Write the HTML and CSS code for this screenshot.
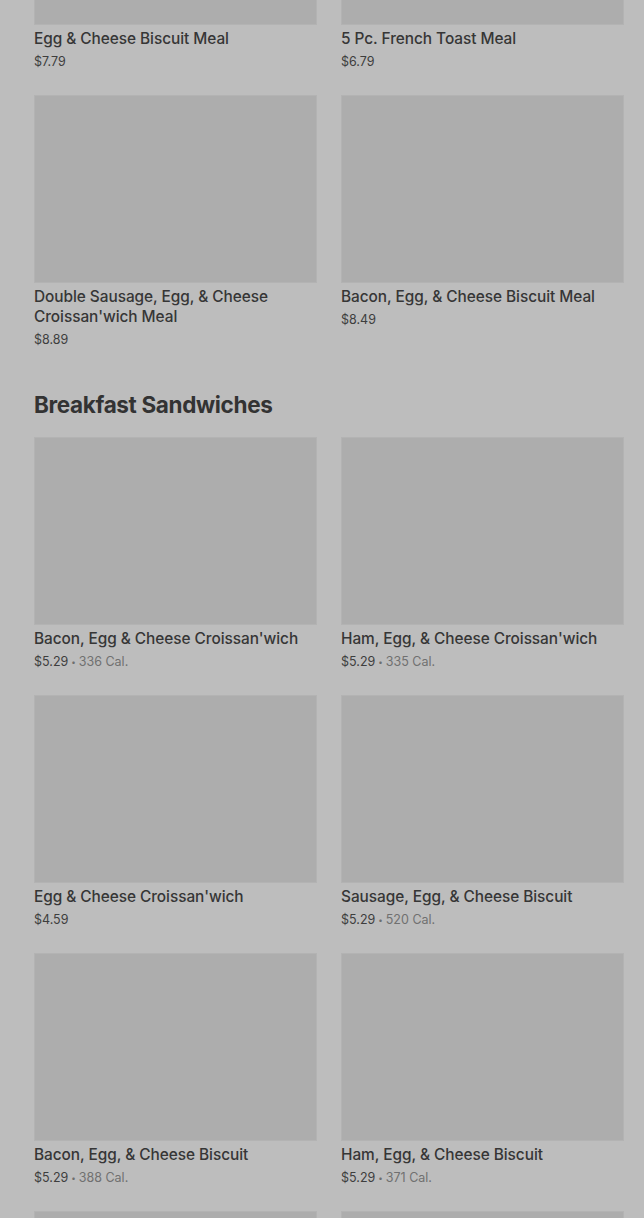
FILE: index.html
```html
<!DOCTYPE html>
<html lang="en">
<head>
<meta charset="utf-8">
<title>Menu</title>
<link rel="stylesheet" href="styles.css">
</head>
<body>
<main class="menu">
  <section class="section section-first">
    <div class="grid">
      <div class="card">
        <div class="thumb"></div>
        <div class="title">Egg &amp; Cheese Biscuit Meal</div>
        <div class="meta"><span class="price">$7.79</span></div>
      </div>
      <div class="card">
        <div class="thumb"></div>
        <div class="title">5 Pc. French Toast Meal</div>
        <div class="meta"><span class="price">$6.79</span></div>
      </div>
      <div class="card">
        <div class="thumb"></div>
        <div class="title">Double Sausage, Egg, &amp; Cheese Croissan'wich Meal</div>
        <div class="meta"><span class="price">$8.89</span></div>
      </div>
      <div class="card">
        <div class="thumb"></div>
        <div class="title">Bacon, Egg, &amp; Cheese Biscuit Meal</div>
        <div class="meta"><span class="price">$8.49</span></div>
      </div>
    </div>
  </section>
  <section class="section">
    <h2 class="heading">Breakfast Sandwiches</h2>
    <div class="grid">
      <div class="card">
        <div class="thumb"></div>
        <div class="title">Bacon, Egg &amp; Cheese Croissan'wich</div>
        <div class="meta"><span class="price">$5.29</span><span class="dot">•</span><span class="cal">336 Cal.</span></div>
      </div>
      <div class="card">
        <div class="thumb"></div>
        <div class="title">Ham, Egg, &amp; Cheese Croissan'wich</div>
        <div class="meta"><span class="price">$5.29</span><span class="dot">•</span><span class="cal">335 Cal.</span></div>
      </div>
      <div class="card">
        <div class="thumb"></div>
        <div class="title">Egg &amp; Cheese Croissan'wich</div>
        <div class="meta"><span class="price">$4.59</span></div>
      </div>
      <div class="card">
        <div class="thumb"></div>
        <div class="title">Sausage, Egg, &amp; Cheese Biscuit</div>
        <div class="meta"><span class="price">$5.29</span><span class="dot">•</span><span class="cal">520 Cal.</span></div>
      </div>
      <div class="card">
        <div class="thumb"></div>
        <div class="title">Bacon, Egg, &amp; Cheese Biscuit</div>
        <div class="meta"><span class="price">$5.29</span><span class="dot">•</span><span class="cal">388 Cal.</span></div>
      </div>
      <div class="card">
        <div class="thumb"></div>
        <div class="title">Ham, Egg, &amp; Cheese Biscuit</div>
        <div class="meta"><span class="price">$5.29</span><span class="dot">•</span><span class="cal">371 Cal.</span></div>
      </div>
      <div class="card card-clipped">
        <div class="thumb"></div>
      </div>
      <div class="card card-clipped">
        <div class="thumb"></div>
      </div>
    </div>
  </section>
</main>
</body>
</html>
```

FILE: styles.css
```css
html, body {
  margin: 0;
  padding: 0;
  background: #bdbdbd;
  height: 100%;
  overflow: hidden;
}

body {
  font-family: Inter, "Liberation Sans", sans-serif;
  color: #363636;
}

.menu {
  padding: 0 20px 0 34px;
  margin-top: -163px;
}

.section-first {
  padding-bottom: 40px;
}

.grid {
  display: grid;
  grid-template-columns: 283px 283px;
  column-gap: 24px;
  row-gap: 24px;
}

.card {
  display: flex;
  flex-direction: column;
}

.thumb {
  height: 188px;
  background: #adadad;
  box-shadow: inset 0 0 0 1px #b3b3b3;
}

.title {
  margin-top: 4px;
  font-size: 15.4px;
  line-height: 20px;
  font-weight: 500;
  color: #363636;
  letter-spacing: -0.05px;
}

.meta {
  margin-top: 4px;
  font-size: 12.5px;
  line-height: 18px;
  display: flex;
  align-items: center;
}

.price {
  color: #3e3e3e;
}

.dot {
  color: #6e6e6e;
  font-size: 8px;
  margin: 0 3px;
}

.cal {
  color: #707070;
}

.heading {
  margin: 0 0 16px;
  font-size: 22.5px;
  line-height: 32px;
  font-weight: 700;
  color: #333333;
  letter-spacing: -0.35px;
}
```
